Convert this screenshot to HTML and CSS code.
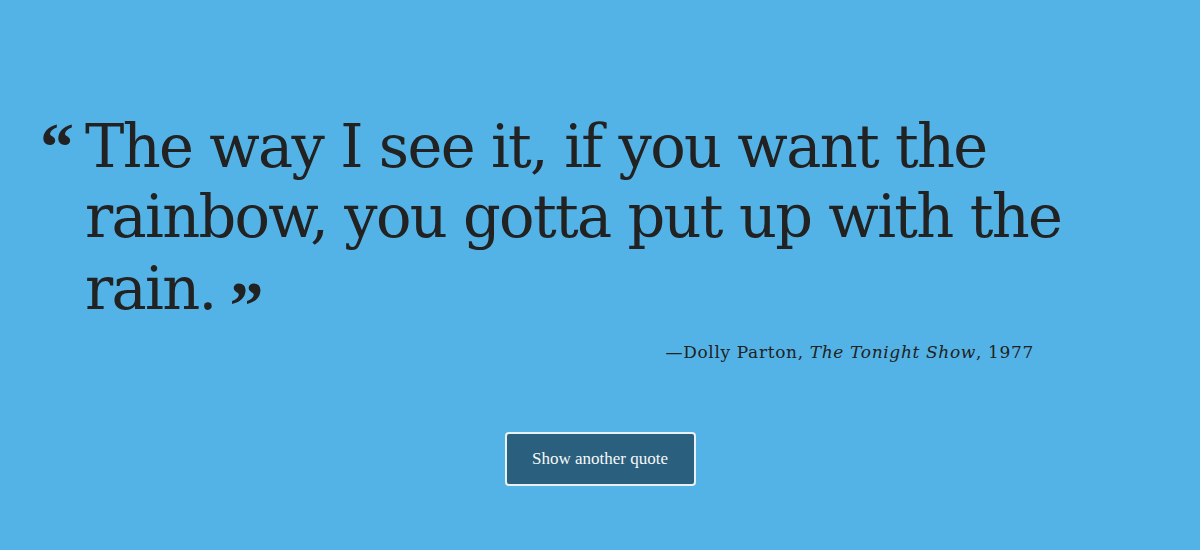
FILE: index.html
```html
<!DOCTYPE html>
<html lang="en">
<head>
<meta charset="utf-8">
<title>Quote</title>
<link rel="stylesheet" href="styles.css">
</head>
<body>
<main class="page">
  <figure class="quote">
    <blockquote class="quote-body">
      <span class="mark mark-open">“</span>
      <p class="quote-text">The way I see it, if you want the rainbow, you gotta put up with the rain.<span class="mark mark-close">”</span></p>
    </blockquote>
    <figcaption class="cite">—Dolly Parton, <cite>The Tonight Show</cite>, 1977</figcaption>
  </figure>
  <div class="actions">
    <button class="btn" type="button">Show another quote</button>
  </div>
</main>
</body>
</html>
```
FILE: styles.css
```css
html, body {
  margin: 0;
  padding: 0;
}
body {
  background: #53b3e6;
  color: #222;
  font-family: "DejaVu Serif", "Liberation Serif", serif;
  width: 1200px;
  height: 550px;
  overflow: hidden;
}
.page {
  padding: 112px 0 0 40px;
  display: flex;
  flex-direction: column;
}
.quote {
  margin: 0;
  width: 1040px;
  display: flex;
  flex-direction: column;
}
.quote-body {
  margin: 0;
  display: flex;
  gap: 12px;
}
.mark {
  font-family: "Liberation Serif", serif;
  font-weight: bold;
  line-height: 1;
  color: #222;
  letter-spacing: 0;
}
.mark-open {
  font-size: 68px;
  width: 33px;
  flex: none;
  height: 60px;
  margin-top: 1px;
}
.mark-close {
  font-size: 68px;
  margin-left: 14px;
  position: relative;
  top: 19px;
}
.quote-text {
  margin: 0;
  font-size: 59px;
  line-height: 70px;
  letter-spacing: -1.7px;
  flex: 1;
}
.cite {
  margin-top: 18px;
  align-self: flex-end;
  font-size: 17px;
  letter-spacing: 0.65px;
  padding-right: 46px;
}
.cite cite {
  font-style: italic;
}
.actions {
  display: flex;
  justify-content: center;
  padding-right: 40px;
  margin-top: 70px;
}
.btn {
  background: #2a5f7e;
  color: #f7f9fa;
  border: 2px solid #e9f1f6;
  border-radius: 4px;
  font-family: "Liberation Serif", serif;
  font-size: 17px;
  width: 191px;
  height: 54px;
  padding: 0;
}
```
